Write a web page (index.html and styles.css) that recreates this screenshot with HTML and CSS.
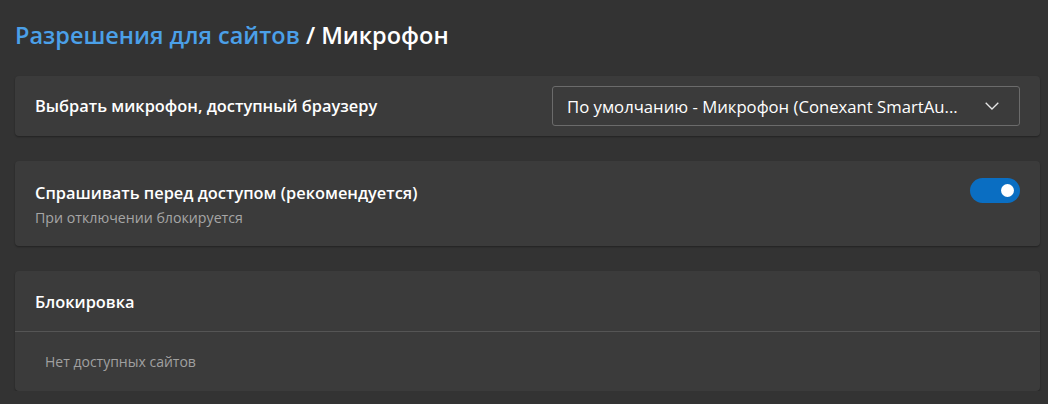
FILE: index.html
```html
<!DOCTYPE html>
<html lang="ru">
<head>
<meta charset="utf-8">
<link rel="stylesheet" href="styles.css">
</head>
<body>
<div class="page">
  <h1 class="title"><span class="crumb">Разрешения для сайтов</span> / Микрофон</h1>

  <div class="card row">
    <div class="label">Выбрать микрофон, доступный браузеру</div>
    <div class="select">
      <span class="select-text">По умолчанию - Микрофон (Conexant SmartAu...</span>
      <svg class="chev" width="14" height="8" viewBox="0 0 14 8"><path d="M0.7 0.7 L7 7 L13.3 0.7" fill="none" stroke="#e6e6e6" stroke-width="1.3"/></svg>
    </div>
  </div>

  <div class="card row tall">
    <div class="texts">
      <div class="label">Спрашивать перед доступом (рекомендуется)</div>
      <div class="sub">При отключении блокируется</div>
    </div>
    <div class="toggle"><span class="knob"></span></div>
  </div>

  <div class="card list">
    <div class="list-head">Блокировка</div>
    <div class="list-empty">Нет доступных сайтов</div>
  </div>
</div>
</body>
</html>
```

FILE: styles.css
```css
html, body {
  margin: 0;
  padding: 0;
  background: #333333;
}
body {
  font-family: "Open Sans", "Noto Sans", sans-serif;
  color: #ffffff;
}
.page {
  padding: 0 8px 0 15px;
  display: flex;
  flex-direction: column;
  gap: 25px;
}
.title {
  margin: 0;
  padding-top: 19px;
  height: 32px;
  font-size: 23.5px;
  font-weight: 600;
  line-height: 33px;
  color: #ffffff;
}
.crumb {
  color: #4ba0e8;
}
.card {
  background: #3b3b3b;
  border-radius: 4px;
  box-shadow: 0 1px 2px rgba(0,0,0,0.35);
}
.row {
  display: flex;
  align-items: center;
  justify-content: space-between;
  height: 60px;
  padding: 0 20px;
  box-sizing: border-box;
}
.row.tall {
  height: 85px;
  align-items: flex-start;
  padding-top: 21px;
}
.label {
  font-size: 16.4px;
  font-weight: 600;
  line-height: 22px;
  color: #ffffff;
}
.sub {
  font-size: 14.2px;
  line-height: 20px;
  margin-top: 4px;
  color: #a6a6a6;
}
.select {
  width: 468px;
  height: 40px;
  box-sizing: border-box;
  border: 1px solid #6b6b6b;
  border-radius: 3px;
  display: flex;
  align-items: center;
  justify-content: space-between;
  padding: 0 20px 0 14px;
}
.select-text {
  font-size: 16.7px;
  color: #ffffff;
  white-space: nowrap;
}
.chev {
  display: block;
}
.toggle {
  width: 50px;
  height: 25px;
  border-radius: 13px;
  background: #0a6ec2;
  position: relative;
  margin-top: -4px;
}
.knob {
  position: absolute;
  width: 13px;
  height: 13px;
  border-radius: 50%;
  background: #ffffff;
  right: 6px;
  top: 6px;
}
.list {
  height: 120px;
  display: flex;
  flex-direction: column;
}
.list-head {
  height: 61px;
  box-sizing: border-box;
  border-bottom: 1px solid #555555;
  padding: 20px 20px 0;
  font-size: 16.4px;
  font-weight: 600;
  line-height: 22px;
}
.list-empty {
  padding: 20px 30px 0;
  font-size: 14px;
  line-height: 20px;
  color: #a0a0a0;
}
```
